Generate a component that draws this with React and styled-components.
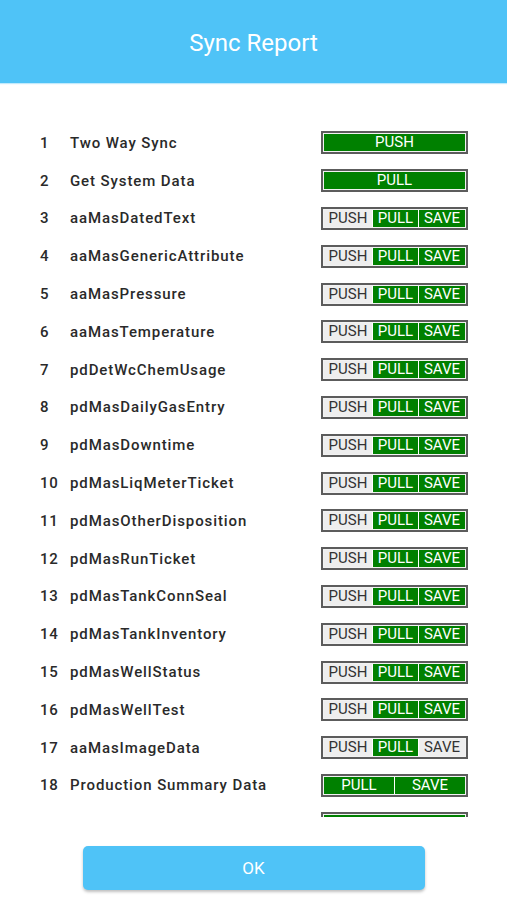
import styled, { createGlobalStyle } from "styled-components";

const GlobalStyle = createGlobalStyle`
    body {
        margin: 0;
        background: #ffffff;
        font-family: Roboto, "Noto Sans", sans-serif;
    }
`

const rows = [
    { num: 1, name: "Two Way Sync", parts: [["PUSH", true]] },
    { num: 2, name: "Get System Data", parts: [["PULL", true]] },
    ...[
        "aaMasDatedText",
        "aaMasGenericAttribute",
        "aaMasPressure",
        "aaMasTemperature",
        "pdDetWcChemUsage",
        "pdMasDailyGasEntry",
        "pdMasDowntime",
        "pdMasLiqMeterTicket",
        "pdMasOtherDisposition",
        "pdMasRunTicket",
        "pdMasTankConnSeal",
        "pdMasTankInventory",
        "pdMasWellStatus",
        "pdMasWellTest",
    ].map((name, i) => ({ num: i + 3, name, parts: [["PUSH", false], ["PULL", true], ["SAVE", true]] })),
    { num: 17, name: "aaMasImageData", parts: [["PUSH", false], ["PULL", true], ["SAVE", false]] },
    { num: 18, name: "Production Summary Data", parts: [["PULL", true], ["SAVE", true]] },
    // next row is scrolled past the bottom edge, only its button frame peeks out
    { num: "", name: "", parts: [["", true]] },
]

const threeWidths = ["48px", "46px", "47px"]

export default function App() {
    return (
        <Page>
            <GlobalStyle />
            <Header>
                <Title>Sync Report</Title>
            </Header>
            <List>
                {rows.map((row, i) => (
                    <Row key={i}>
                        <Num>{row.num}</Num>
                        <Name>{row.name}</Name>
                        <Group>
                            {row.parts.map(([label, on], j) => (
                                <Segment
                                    key={j}
                                    $on={on}
                                    $first={j === 0}
                                    $basis={row.parts.length === 3 ? threeWidths[j] : "0"}
                                >
                                    {label}
                                </Segment>
                            ))}
                        </Group>
                    </Row>
                ))}
            </List>
            <Footer>
                <OkButton>OK</OkButton>
            </Footer>
        </Page>
    )
}

const Page = styled.div`
    width: 507px;
    height: 900px;
    display: flex;
    flex-direction: column;
    overflow: hidden;
`

const Header = styled.header`
    height: 83px;
    flex-shrink: 0;
    background: #4fc3f7;
    display: flex;
    align-items: center;
    justify-content: center;
    box-shadow: 0 1px 1px rgba(79, 195, 247, 0.35);
`

const Title = styled.h1`
    margin: 3px 0 0 0;
    color: #ffffff;
    font-size: 24px;
    font-weight: 400;
`

const List = styled.div`
    height: 693px;
    padding-top: 41px;
    flex-shrink: 0;
    overflow: hidden;
`

const Row = styled.div`
    height: 37.8px;
    display: grid;
    grid-template-columns: 30px 1fr 147px;
    align-items: center;
    padding: 0 39px 0 40px;
`

const Num = styled.span`
    font-size: 15px;
    font-weight: 500;
    color: #2a2a2a;
    letter-spacing: 0.6px;
`

const Name = styled.span`
    font-size: 15px;
    font-weight: 500;
    color: #2a2a2a;
    letter-spacing: 0.9px;
    white-space: nowrap;
`

const Group = styled.div`
    height: 23px;
    box-sizing: border-box;
    border: 2px solid #5c5c5c;
    padding: 1px;
    background: #f2f2f2;
    display: flex;
`

const Segment = styled.div`
    flex: ${p => (p.$basis === "0" ? "1 1 0" : `0 0 ${p.$basis}`)};
    box-sizing: border-box;
    border-left: ${p => (p.$first ? "none" : "1px solid #ffffff")};
    background: ${p => (p.$on ? "#008000" : "#eeeeee")};
    color: ${p => (p.$on ? "#ffffff" : "#333333")};
    font-size: 15px;
    line-height: 17px;
    text-align: center;
`

const Footer = styled.div`
    flex: 1;
    display: flex;
    justify-content: center;
    padding-top: 29px;
`

const OkButton = styled.button`
    width: 342px;
    height: 44px;
    border: none;
    border-radius: 5px;
    background: #4fc3f7;
    color: #ffffff;
    font-family: Roboto, sans-serif;
    font-size: 17px;
    box-shadow: 0 2px 3px rgba(0, 0, 0, 0.25);
`
